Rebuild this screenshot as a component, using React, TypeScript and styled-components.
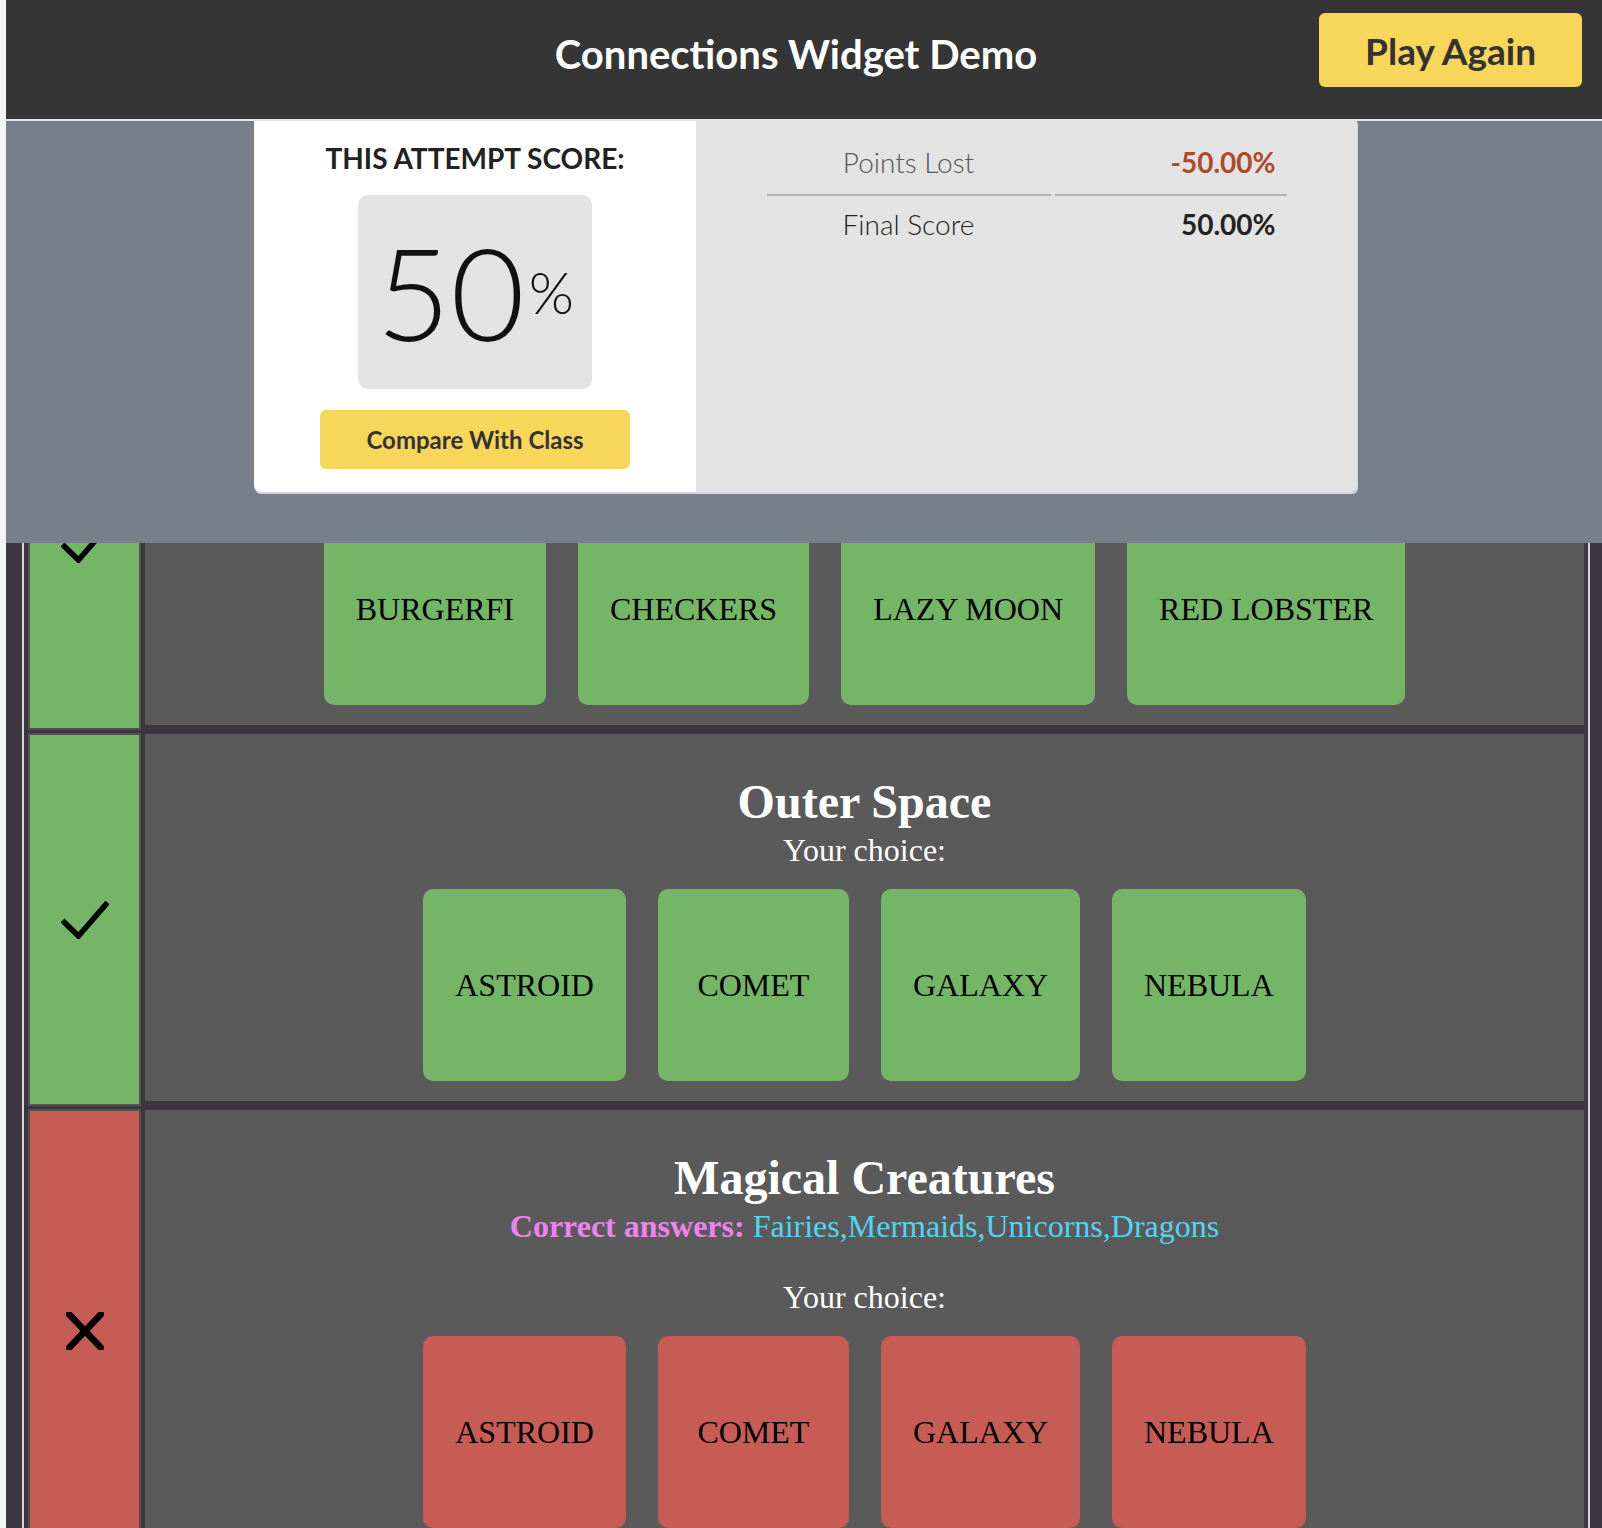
import React from 'react';
import styled, { createGlobalStyle } from 'styled-components';

const GlobalStyle = createGlobalStyle`
  * { box-sizing: border-box; }
  html, body { margin: 0; padding: 0; height: 100%; }
  body {
    background: #f4f4f4;
    padding-left: 6px;
    overflow: hidden;
    font-family: Lato, "Liberation Sans", sans-serif;
  }
`;

const Shell = styled.div`
  height: 100vh;
  display: flex;
  flex-direction: column;
  background: #3c363e;
`;

const Header = styled.header`
  flex: none;
  height: 121px;
  display: grid;
  grid-template-columns: 1fr auto 1fr;
  align-items: center;
  padding: 13px 20px 32px 4px;
  background: #353535;
  border-bottom: 2px solid #e4e4e4;
`;

const Title = styled.h1`
  grid-column: 2;
  margin: 0;
  padding-top: 7px;
  font-family: Lato, "Liberation Sans", sans-serif;
  font-size: 40px;
  font-weight: 700;
  line-height: 1.2;
  color: #ffffff;
`;

const PlayAgain = styled.button`
  grid-column: 3;
  justify-self: end;
  height: 74px;
  padding: 0 46px;
  border: none;
  border-radius: 6px;
  background: #f8d65a;
  color: #333333;
  font-family: Lato, "Liberation Sans", sans-serif;
  font-size: 37px;
  font-weight: 700;
`;

const ScoreOverlay = styled.section`
  flex: none;
  height: 422px;
  display: flex;
  justify-content: center;
  align-items: flex-start;
  padding-left: 3px;
  background: #787f8a;
`;

const ScoreCard = styled.div`
  display: grid;
  grid-template-columns: 442px 661px;
  height: 371px;
  border-radius: 0 0 6px 6px;
  overflow: hidden;
  box-shadow: 1px 2px 0 #d3d5d9;
`;

const AttemptColumn = styled.div`
  display: flex;
  flex-direction: column;
  align-items: center;
  padding-top: 21px;
  background: #ffffff;
`;

const AttemptLabel = styled.h2`
  margin: 0;
  font-size: 28px;
  font-weight: 700;
  line-height: 1.2;
  color: #222222;
`;

const ScoreBox = styled.div`
  margin-top: 19px;
  width: 234px;
  height: 194px;
  display: flex;
  align-items: center;
  justify-content: center;
  border-radius: 10px;
  background: #e3e3e3;
  color: #111111;
`;

const ScoreNumber = styled.span`
  font-size: 128px;
  font-weight: 300;
  line-height: 1.2;
`;

const ScorePercent = styled.span`
  margin-left: 4px;
  font-size: 58px;
  font-weight: 300;
  line-height: 1.2;
`;

const CompareButton = styled.button`
  margin-top: 21px;
  width: 310px;
  height: 59px;
  border: none;
  border-radius: 6px;
  background: #f8d65a;
  color: #333333;
  font-family: Lato, "Liberation Sans", sans-serif;
  font-size: 24px;
  font-weight: 700;
`;

const StatsColumn = styled.div`
  display: flex;
  justify-content: center;
  align-items: flex-start;
  padding-top: 13px;
  background: #e3e3e3;
`;

const StatsGrid = styled.div`
  display: grid;
  grid-template-columns: 284px 232px;
  column-gap: 4px;
`;

const StatCell = styled.div<{ $divided?: boolean; $align: 'center' | 'right'; $bold?: boolean; $color: string }>`
  padding: 12px 11px 14px;
  font-size: 28px;
  line-height: 1.2;
  font-weight: ${(p) => (p.$bold ? 700 : 300)};
  text-align: ${(p) => p.$align};
  color: ${(p) => p.$color};
  border-bottom: ${(p) => (p.$divided ? '2px solid #b3b3b3' : '2px solid transparent')};
`;

const ResultsViewport = styled.main`
  flex: 1;
  min-height: 0;
  overflow: hidden;
  padding: 0 12px 0 16px;
  background: #3c363e;
`;

const ResultsTable = styled.div`
  margin-top: -186px;
  display: flex;
  flex-direction: column;
  gap: 3px;
  padding: 0 4px;
  border-left: 2px solid #d6d6d6;
  border-right: 2px solid #d6d6d6;
`;

const ResultRow = styled.div`
  display: grid;
  grid-template-columns: 113px 1fr;
  column-gap: 4px;
`;

const StatusCell = styled.div<{ $correct: boolean }>`
  display: flex;
  align-items: center;
  justify-content: center;
  border: 2px solid #535055;
  background: ${(p) => (p.$correct ? '#74b566' : '#c75c55')};
`;

const RowBody = styled.div<{ $continued?: boolean }>`
  margin: 1px 0 5px;
  padding: ${(p) => (p.$continued ? '155px' : '40px')} 0 20px;
  background: #5a5a5a;
  text-align: center;
  color: #ffffff;
  font-family: "Liberation Serif", "Times New Roman", serif;
`;

const GroupTitle = styled.h3`
  margin: 0 0 3px;
  font-size: 48px;
  font-weight: 700;
  line-height: normal;
`;

const Answers = styled.p`
  margin: 0 0 34px;
  font-size: 32px;
  line-height: normal;
`;

const AnswersLabel = styled.b`
  color: #ee82ee;
`;

const AnswersList = styled.span`
  color: #55d4f2;
`;

const ChoiceLabel = styled.p`
  margin: 0 0 20px;
  font-size: 32px;
  line-height: normal;
`;

const CardRow = styled.div`
  display: flex;
  justify-content: center;
  gap: 32px;
`;

const WordCard = styled.div<{ $correct: boolean }>`
  min-width: 191px;
  height: 192px;
  padding: 0 32px;
  display: flex;
  align-items: center;
  justify-content: center;
  border-radius: 10px;
  background: ${(p) => (p.$correct ? '#74b566' : '#c75c55')};
  color: #000000;
  font-size: 32px;
  line-height: normal;
`;

const CheckIcon = () => (
  <svg width="48" height="38" viewBox="0 0 48 38" aria-hidden="true">
    <polyline points="1.5,19.5 17.5,35 46.5,1.5" fill="none" stroke="#000" strokeWidth="5.5" strokeLinejoin="miter" />
  </svg>
);

const CrossIcon = () => (
  <svg width="38" height="38" viewBox="0 0 38 38" aria-hidden="true">
    <line x1="1" y1="0" x2="37" y2="38" stroke="#000" strokeWidth="6.5" />
    <line x1="37" y1="0" x2="1" y2="38" stroke="#000" strokeWidth="6.5" />
  </svg>
);

type Group = {
  title?: string;
  correct: boolean;
  words: string[];
  answers?: string[];
};

/* The first group is scrolled up under the score panel: only its cards remain in view. */
const groups: Group[] = [
  { correct: true, words: ['BURGERFI', 'CHECKERS', 'LAZY MOON', 'RED LOBSTER'] },
  { title: 'Outer Space', correct: true, words: ['ASTROID', 'COMET', 'GALAXY', 'NEBULA'] },
  {
    title: 'Magical Creatures',
    correct: false,
    words: ['ASTROID', 'COMET', 'GALAXY', 'NEBULA'],
    answers: ['Fairies', 'Mermaids', 'Unicorns', 'Dragons'],
  },
];

export default function App() {
  return (
    <>
      <GlobalStyle />
      <Shell>
        <Header>
          <Title>Connections Widget Demo</Title>
          <PlayAgain>Play Again</PlayAgain>
        </Header>

        <ScoreOverlay>
          <ScoreCard>
            <AttemptColumn>
              <AttemptLabel>THIS ATTEMPT SCORE:</AttemptLabel>
              <ScoreBox>
                <ScoreNumber>50</ScoreNumber>
                <ScorePercent>%</ScorePercent>
              </ScoreBox>
              <CompareButton>Compare With Class</CompareButton>
            </AttemptColumn>
            <StatsColumn>
              <StatsGrid>
                <StatCell $divided $align="center" $color="#555555">Points Lost</StatCell>
                <StatCell $divided $align="right" $bold $color="#b0492c">-50.00%</StatCell>
                <StatCell $align="center" $color="#222222">Final Score</StatCell>
                <StatCell $align="right" $bold $color="#222222">50.00%</StatCell>
              </StatsGrid>
            </StatsColumn>
          </ScoreCard>
        </ScoreOverlay>

        <ResultsViewport>
          <ResultsTable>
            {groups.map((g, i) => (
              <ResultRow key={i}>
                <StatusCell $correct={g.correct}>{g.correct ? <CheckIcon /> : <CrossIcon />}</StatusCell>
                <RowBody $continued={!g.title}>
                  {g.title && <GroupTitle>{g.title}</GroupTitle>}
                  {g.answers && (
                    <Answers>
                      <AnswersLabel>Correct answers:</AnswersLabel>{' '}
                      <AnswersList>{g.answers.join(',')}</AnswersList>
                    </Answers>
                  )}
                  {g.title && <ChoiceLabel>Your choice:</ChoiceLabel>}
                  <CardRow>
                    {g.words.map((w) => (
                      <WordCard key={w} $correct={g.correct}>{w}</WordCard>
                    ))}
                  </CardRow>
                </RowBody>
              </ResultRow>
            ))}
          </ResultsTable>
        </ResultsViewport>
      </Shell>
    </>
  );
}
